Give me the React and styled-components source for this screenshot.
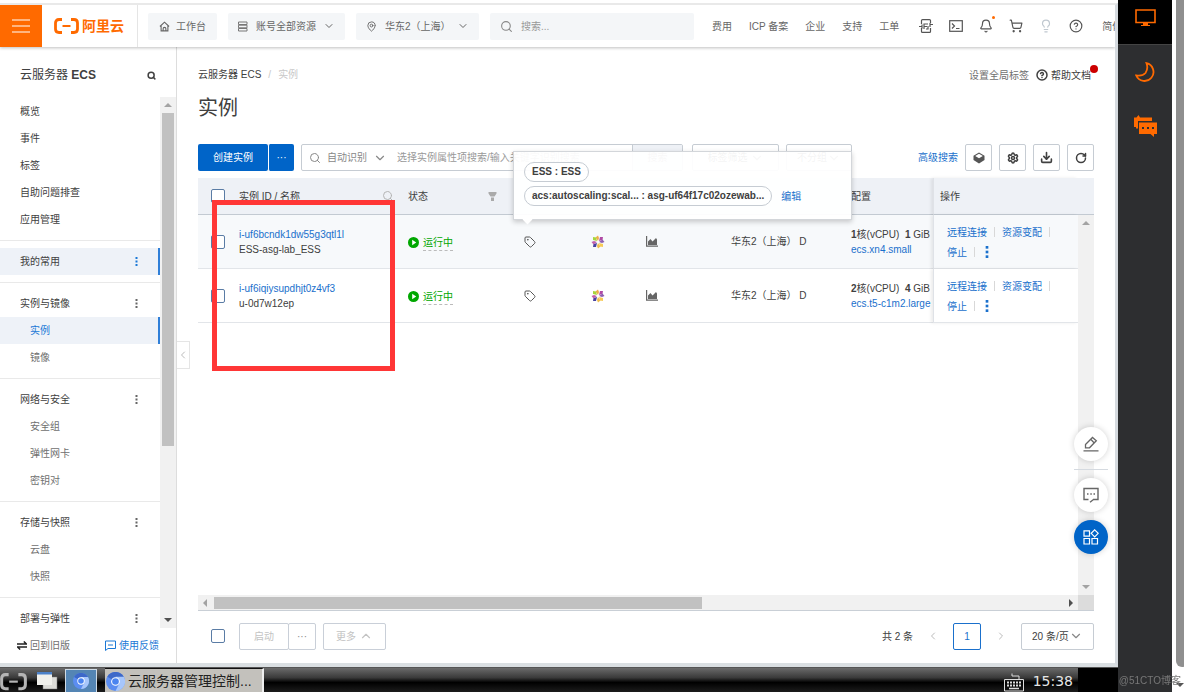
import React from "react"
import styled, { createGlobalStyle, css } from "styled-components"
import {
  Search,
  ChevronDown,
  ChevronUp,
  ChevronLeft,
  ChevronRight,
  MapPin,
  Bell,
  ShoppingCart,
  Lightbulb,
  CircleHelp,
  RotateCw,
  Settings,
  Tag,
  Download,
} from "lucide-react"

const GlobalStyle = createGlobalStyle`
  *, *::before, *::after {
    box-sizing: border-box;
  }
  body {
    margin: 0;
    font-family: "Liberation Sans", "Noto Sans CJK SC", sans-serif;
    font-size: 10px;
    line-height: 15px;
    color: #404040;
    background: #ffffff;
  }
  button, input, select {
    font: inherit;
    color: inherit;
    margin: 0;
  }
  button {
    padding: 0;
    border: none;
    background: none;
    cursor: pointer;
  }
  a {
    color: inherit;
    text-decoration: none;
  }
  h1, h2 {
    margin: 0;
    padding: 0;
  }
  svg {
    display: block;
    flex: none;
  }
`

const Screen = styled.div`
  display: flex;
  height: 100vh;
  min-height: 600px;
  overflow: hidden;
`

const Desktop = styled.div`
  flex: 1;
  min-width: 0;
  display: flex;
  flex-direction: column;
`

const Browser = styled.div`
  flex: 1;
  min-height: 0;
  display: flex;
  flex-direction: column;
  margin-top: 3px;
  border-top: 2px solid #e9e9e9;
  border-right: 3px solid #d5dadf;
  border-bottom: 4px solid #dadfe2;
  overflow: hidden;
`

/* ---------- top bar ---------- */

const TopBar = styled.header`
  flex: none;
  display: flex;
  align-items: center;
  height: 42px;
  background: #ffffff;
  box-shadow: 0 1px 3px rgba(0, 0, 0, 0.25);
  z-index: 2;
  overflow: clip;
  overflow-clip-margin: 4px;
  color: #666666;
`

const MenuButton = styled.button`
  flex: none;
  display: flex;
  align-items: center;
  justify-content: center;
  width: 42px;
  height: 42px;
  background: #ff6a00;
`

const Brand = styled.a`
  flex: none;
  display: flex;
  align-items: center;
  gap: 3px;
  width: 96px;
  height: 42px;
  padding-left: 12px;
  border-right: 1px solid #e5e5e5;
  color: #ff6a00;
  font-size: 14px;
  font-weight: 700;
`

const chip = css`
  display: flex;
  align-items: center;
  height: 27px;
  background: #f4f6f8;
  border-radius: 2px;
`

const ChipButton = styled.button`
  ${chip}
  flex: none;
  gap: 6px;
  margin-left: 10px;
  padding: 0 11px;
`

const ChipSelect = styled.label`
  ${chip}
  flex: none;
  gap: 8px;
  margin-left: 11px;
  padding: 0 10px;
`

const PlainSelect = styled.select`
  width: ${(p) => p.$width}px;
  appearance: none;
  padding: 0 16px 0 0;
  border: none;
  outline: none;
  background: none;
`

const SelectArrow = styled.span`
  margin-left: -20px;
  pointer-events: none;
`

const GlobalSearch = styled.label`
  ${chip}
  flex: 1;
  max-width: 204px;
  gap: 8px;
  margin-left: 11px;
  padding: 0 10px;
  color: #888888;
`

const BareInput = styled.input`
  flex: 1;
  min-width: 0;
  width: 100%;
  padding: 0;
  border: none;
  outline: none;
  background: none;
  &::placeholder {
    color: #999999;
    opacity: 1;
  }
`

const TopLinks = styled.nav`
  flex: none;
  display: flex;
  align-items: center;
  gap: 17px;
  width: 403px;
  margin-left: auto;
  white-space: nowrap;
`

const TopIcons = styled.div`
  display: flex;
  align-items: center;
  gap: 16px;
  margin: 0 2px 0 3px;
  color: #555555;
`

const BellButton = styled.button`
  position: relative;
  &::after {
    content: "";
    position: absolute;
    top: -3px;
    right: -2px;
    width: 3px;
    height: 3px;
    border-radius: 50%;
    background: #ff6a00;
  }
`

/* ---------- side navigation ---------- */

const Body = styled.div`
  flex: 1;
  min-height: 0;
  display: flex;
`

const Sidebar = styled.aside`
  flex: none;
  display: flex;
  flex-direction: column;
  width: 177px;
  border-right: 1px solid #dddddd;
`

const SideHeader = styled.div`
  flex: none;
  display: flex;
  align-items: center;
  justify-content: space-between;
  height: 50px;
  padding: 6px 20px 0;
`

const SideTitle = styled.h2`
  font-size: 12px;
  font-weight: 400;
`

const SideScroll = styled.div`
  flex: 1;
  min-height: 0;
  display: flex;
`

const SideList = styled.nav`
  flex: 1;
  overflow: hidden;
  padding-top: 1px;
`

const SideGroup = styled.div`
  padding-bottom: 7px;
  margin-bottom: 7px;
  border-bottom: 1px solid #e9e9e9;
`

const SideItem = styled.a`
  display: flex;
  align-items: center;
  justify-content: space-between;
  height: 27px;
  padding: 0 22px 0 ${(p) => (p.$nested ? 30 : 20)}px;
  color: ${(p) => (p.$nested ? "#707070" : "#404040")};
  ${(p) =>
    p.$active &&
    css`
      background: #eef2f8;
      border-right: 2px solid #2f7fd8;
      padding-right: 20px;
    `}
  ${(p) => p.$active && p.$nested && "color: #1a78d6;"}
`

const SideFooter = styled.div`
  flex: none;
  display: flex;
  align-items: center;
  justify-content: space-between;
  height: 35px;
  padding: 0 17px;
`

const FootLink = styled.a`
  display: flex;
  align-items: center;
  gap: 3px;
  color: ${(p) => (p.$primary ? "#1a78d6" : "#707070")};
`

/* ---------- scroll bars ---------- */

const ScrollTrack = styled.div`
  flex: none;
  display: flex;
  flex-direction: ${(p) => (p.$row ? "row" : "column")};
  align-items: center;
  background: #f1f1f1;
  ${(p) => (p.$row ? "height: 15px; padding: 0 4px;" : "width: 16px; padding: 5px 0;")}
`

const ScrollThumb = styled.div`
  background: #c1c1c1;
  ${(p) =>
    p.$row
      ? "width: 56%; height: 12px; margin-left: 6px;"
      : "width: 12px; height: 64%; margin-top: 5px;"}
`

const ArrowEnd = styled.span`
  display: flex;
  ${(p) => (p.$row ? "margin-left: auto;" : "margin-top: auto;")}
`

/* ---------- main column ---------- */

const Main = styled.main`
  position: relative;
  flex: 1;
  min-width: 0;
  display: flex;
  flex-direction: column;
  padding: 20px 21px 0;
`

const CollapseTab = styled.button`
  position: absolute;
  left: 0;
  top: 294px;
  display: flex;
  align-items: center;
  justify-content: center;
  width: 13px;
  height: 28px;
  border: 1px solid #e5e5e5;
  border-left: none;
  color: #bbbbbb;
`

const Crumbs = styled.div`
  flex: none;
  display: flex;
  justify-content: space-between;
  height: 16px;
`

const CrumbPath = styled.div`
  display: flex;
  gap: 7px;
  color: #c8c8c8;
`

const CrumbLink = styled.a`
  color: #404040;
`

const HelpLinks = styled.div`
  position: relative;
  display: flex;
  align-items: center;
  gap: 7px;
  padding-right: 3px;
  color: #707070;
`

const HelpLink = styled.a`
  display: flex;
  align-items: center;
  gap: 3px;
  color: #404040;
`

const RedDot = styled.span`
  position: absolute;
  top: -2px;
  right: -4px;
  width: 8px;
  height: 8px;
  border-radius: 50%;
  background: #cc0000;
`

const PageTitle = styled.h1`
  flex: none;
  margin: 10px 0 21px;
  font-size: 20px;
  line-height: 30px;
  font-weight: 400;
`

const Toolbar = styled.div`
  flex: none;
  display: flex;
  align-items: center;
  gap: 7px;
  height: 27px;
  margin-bottom: 7px;
`

const ButtonGroup = styled.div`
  display: flex;
`

const PrimaryButton = styled.button`
  width: ${(p) => p.$width}px;
  height: 27px;
  background: #0064c8;
  color: #ffffff;
  border-radius: 2px;
  & + & {
    border-left: 1px solid #ffffff;
  }
`

const FilterBox = styled.div`
  flex: 1;
  max-width: 382px;
  display: flex;
  align-items: center;
  gap: 6px;
  height: 27px;
  padding-left: 7px;
  border: 1px solid #c6ccd3;
  border-radius: 2px;
  color: #888888;
`

const FilterInput = styled(BareInput)`
  padding-left: 4px;
`

const FilterSubmit = styled.button`
  width: 50px;
  height: 25px;
  border-left: 1px solid #c6ccd3;
  background: #eef1f6;
  color: #888888;
`

const OutlineSelect = styled.label`
  display: flex;
  align-items: center;
  justify-content: center;
  width: ${(p) => p.$box}px;
  height: 27px;
  margin-left: ${(p) => (p.$gap ? 2 : 0)}px;
  border: 1px solid #c6ccd3;
  border-radius: 2px;
  svg {
    color: #888888;
  }
`

const ToolbarEnd = styled.div`
  display: flex;
  align-items: center;
  gap: 7px;
  margin-left: auto;
`

const Link = styled.a`
  color: #1a70cc;
`

const IconButton = styled.button`
  display: flex;
  align-items: center;
  justify-content: center;
  width: 27px;
  height: 27px;
  border: 1px solid #c6ccd3;
  border-radius: 2px;
`

/* ---------- instance table ---------- */

const TableArea = styled.section`
  position: relative;
  flex: 1;
  min-height: 0;
  display: flex;
`

const TableView = styled.div`
  flex: 1;
  min-width: 0;
`

const Table = styled.table`
  width: 100%;
  table-layout: fixed;
  border-collapse: separate;
  border-spacing: 0;
`

const Th = styled.th`
  height: 37px;
  padding: 0 10px;
  background: #eef1f6;
  border-bottom: 1px solid #c3cad2;
  font-weight: 400;
  text-align: left;
  white-space: nowrap;
`

const Td = styled.td`
  height: 54px;
  padding: 0 10px;
  border-bottom: 1px solid #e2e5e9;
  white-space: nowrap;
  overflow: hidden;
`

const Row = styled.tr`
  background: ${(p) => (p.$hover ? "#f7f9fb" : "#ffffff")};
`

const fixedEdge = css`
  border-left: 1px solid #dfe2e7;
  box-shadow: -2px 0 3px rgba(0, 0, 0, 0.08);
`

const OpsTh = styled(Th)`
  ${fixedEdge}
  padding: 0 6px;
`

const OpsTd = styled(Td)`
  ${fixedEdge}
  padding: 1px 0 0 13px;
`

const HeadInner = styled.div`
  display: flex;
  align-items: center;
  justify-content: space-between;
  padding-right: ${(p) => (p.$inset ? 7 : 0)}px;
  svg {
    color: #b4b4b4;
  }
  & > svg {
    margin-right: -6px;
  }
`

const Check = styled.input.attrs({ type: "checkbox" })`
  display: block;
  appearance: none;
  width: 14px;
  height: 14px;
  margin: 0 0 0 ${(p) => (p.$indent ? 13 : 3)}px;
  border: 1px solid #5a7ca5;
  border-radius: 2px;
  background: #ffffff;
`

const Status = styled.div`
  display: flex;
  align-items: center;
  gap: 4px;
  padding-top: 2px;
  color: #00a700;
`

const StatusText = styled.span`
  border-bottom: 1px dashed #bbbbbb;
`

const OpsLine = styled.div`
  display: flex;
  align-items: center;
  height: 20px;
  gap: 7px;
  color: #1a70cc;
`

const MoreButton = styled.button`
  padding-left: 3px;
`

const Bar = styled.span`
  width: 1px;
  height: 10px;
  background: #d8d8d8;
`

const ScrollColumn = styled.div`
  display: flex;
  flex-direction: column;
  &::before {
    content: "";
    height: 37px;
    background: #eef1f6;
    border-bottom: 1px solid #c3cad2;
  }
`

const GrowTrack = styled(ScrollTrack)`
  flex: 1;
`

const ScrollRow = styled.div`
  flex: none;
  display: flex;
  background: #dcdcdc;
  border-bottom: 1px solid #c9cfd6;
  padding-right: 16px;
  & > * {
    flex: 1;
  }
`

const Highlight = styled.div`
  position: absolute;
  left: 14px;
  top: 22px;
  width: 183px;
  height: 171px;
  border: 5px solid #ff3636;
  pointer-events: none;
`

const Balloon = styled.div`
  position: absolute;
  left: 315px;
  top: -27px;
  width: 339px;
  display: flex;
  flex-direction: column;
  align-items: flex-start;
  gap: 4px;
  padding: 10px 10px 13px;
  border: 1px solid #d3d6da;
  background: rgba(255, 255, 255, 0.94);
  box-shadow: 0 2px 5px rgba(0, 0, 0, 0.2);
  &::after {
    content: "";
    position: absolute;
    left: 10px;
    bottom: -4px;
    width: 7px;
    height: 7px;
    background: #ffffff;
    transform: rotate(45deg);
  }
`

const BalloonLine = styled.div`
  display: flex;
  align-items: center;
  gap: 9px;
`

const Pill = styled.span`
  height: 20px;
  padding: 0 7px;
  border: 1px solid #c6ccd3;
  border-radius: 10px;
  line-height: 18px;
  font-weight: 700;
  white-space: nowrap;
`

/* ---------- table footer ---------- */

const Footer = styled.div`
  flex: none;
  display: flex;
  align-items: center;
  gap: 7px;
  height: 52px;
  padding-bottom: 2px;
`

const GhostButton = styled.button`
  display: flex;
  align-items: center;
  justify-content: center;
  gap: 3px;
  width: ${(p) => p.$width}px;
  height: 27px;
  border: 1px solid #c9cfd8;
  border-radius: 2px;
  color: ${(p) => (p.$dark ? "#888888" : "#c3c3c3")};
  & + & {
    margin-left: -1px;
  }
`

const FooterGroup = styled(ButtonGroup)`
  margin-left: 7px;
`

const Pager = styled.div`
  display: flex;
  align-items: center;
  gap: 14px;
  margin-left: auto;
  & > button:not([aria-current]) {
    color: #bbbbbb;
  }
`

const PageNumber = styled.button`
  width: 28px;
  height: 27px;
  border: 1px solid #1a70cc;
  border-radius: 2px;
  color: #1a70cc;
`

const FloatBar = styled.div`
  position: absolute;
  right: 7px;
  bottom: 109px;
  display: flex;
  flex-direction: column;
  gap: 8px;
`

const RoundButton = styled.button`
  display: flex;
  align-items: center;
  justify-content: center;
  width: 34px;
  height: 34px;
  border-radius: 50%;
  background: ${(p) => (p.$primary ? "#0064c8" : "#ffffff")};
  color: ${(p) => (p.$primary ? "#ffffff" : "#666666")};
  box-shadow: 0 0 6px rgba(0, 0, 0, 0.18);
`

const FloatRule = styled.span`
  height: 1px;
  background: #d5dae0;
`

/* ---------- desktop task bar and remote rail ---------- */

const TaskBar = styled.footer`
  flex: none;
  display: flex;
  align-items: center;
  height: 25px;
  border-top: 1px solid #555555;
  background: linear-gradient(#6a6a6a 0, #3a3a3a 40%, #000000 60%, #1c1c1c 100%);
  color: #e5e5e5;
  overflow: hidden;
`

const Launcher = styled.button`
  margin-right: 10px;
  padding-top: 4px;
`

const Pinned = styled.button`
  display: flex;
  justify-content: center;
  width: 32px;
  height: 24px;
  margin: 2px 8px 0 7px;
  padding-top: 3px;
  background: #5485b4;
  border: 1px solid #cfdbe6;
  border-bottom: none;
`

const Task = styled.button`
  display: flex;
  align-items: center;
  gap: 3px;
  width: 159px;
  height: 24px;
  padding: 2px 2px 0 1px;
  background: #c3c1bc;
  border-top: 1px solid #111111;
  border-right: 2px solid #eeeeee;
  color: #222222;
  font-size: 14px;
  white-space: nowrap;
`

const Tray = styled.div`
  display: flex;
  align-items: center;
  align-self: stretch;
  gap: 9px;
  margin-left: auto;
  font-size: 14px;
  & > svg {
    align-self: flex-end;
  }
`

const Clock = styled.time`
  padding-top: 2px;
  font-family: "DejaVu Sans", sans-serif;
`

const TrayBlank = styled.span`
  align-self: stretch;
  width: 40px;
  margin-left: -4px;
  background: #000000;
`

const Rail = styled.aside`
  flex: none;
  display: flex;
  flex-direction: column;
  width: 54px;
  background: #2d2e30;
  color: #ff6a00;
`

const RailButton = styled.button`
  display: flex;
  align-items: center;
  justify-content: center;
  height: ${(p) => (p.$active ? 45 : 54)}px;
  padding-bottom: ${(p) => (p.$active ? 9 : 0)}px;
  background: ${(p) => (p.$active ? "#000000" : "none")};
  border-bottom: ${(p) => (p.$active ? "1px solid #444444" : "none")};
`

const OuterScroll = styled.div`
  flex: none;
  display: flex;
  flex-direction: column;
  width: 12px;
  padding-left: 4px;
  padding-bottom: 4px;
  gap: 15px;
  overflow: hidden;
`

const OuterThumb = styled.div`
  flex: 1;
  width: 12px;
  background: #8f8f8f;
  border-radius: 0 0 6px 6px;
`

const Watermark = styled.span`
  position: fixed;
  right: 3px;
  bottom: 4px;
  color: #777777;
`

/* ---------- drawings ---------- */

const Triangle = ({ dir, color = "#a3a3a3" }) => {
  const points = {
    up: "0,6 5,1 10,6",
    down: "0,1 5,6 10,1",
    left: "6,0 1,5 6,10",
    right: "1,0 6,5 1,10",
  }
  const row = dir === "left" || dir === "right"
  return (
    <svg width={row ? 6 : 8} height={row ? 8 : 6} viewBox={row ? "0 0 7 10" : "0 0 10 7"}>
      <polygon points={points[dir]} fill={color} />
    </svg>
  )
}

const BracketMark = ({ width = 25, color = "#ff6a00" }) => (
  <svg width={width} height={(width * 16) / 25} viewBox="0 0 25 16" fill="none" stroke={color}>
    <path d="M8 1.500H5Q1.500 1.500 1.500 5V11Q1.500 14.500 5 14.500H8" strokeWidth="2.800" />
    <path d="M17 1.500H20Q23.500 1.500 23.500 5V11Q23.500 14.500 20 14.500H17" strokeWidth="2.800" />
    <path d="M8.500 8H16.500" strokeWidth="2" />
  </svg>
)

const Dots = ({ color = "#555555", size = 9 }) => (
  <svg width={size / 3} height={size} viewBox="0 0 3 9" fill={color}>
    <rect x="0.500" width="2" height="2" />
    <rect x="0.500" y="3.500" width="2" height="2" />
    <rect x="0.500" y="7" width="2" height="2" />
  </svg>
)

const HomeIcon = () => (
  <svg width="11" height="11" viewBox="0 0 12 12" fill="none" stroke="#666" strokeWidth="1.200">
    <path d="M1 6 6 1.300 11 6M2.300 5V10.800H9.700V5M4.500 10.800V8.500Q4.500 7 6 7T7.500 8.500V10.800" />
  </svg>
)

const StackIcon = () => (
  <svg width="10" height="11" viewBox="0 0 10 11" fill="none" stroke="#777">
    <path d="M.5 1H9V3.500H.5ZM.5 4.200H9V6.800H.5ZM.5 7.500H9V10H.5Z" />
  </svg>
)

const ApiIcon = () => (
  <svg width="14" height="14" viewBox="0 0 14 14" fill="none" stroke="currentColor" strokeWidth="1.200">
    <path d="M2.500 5V1.500Q2.500.6 3.500.6H10.500Q11.500.6 11.500 1.500V4M2.500 9V12.500Q2.500 13.400 3.500 13.400H10.500Q11.500 13.400 11.500 12.500V9" />
    <path d="M0 7.500H3M11 5.500H14M5 10V5H9M5 7.500H8M9 7V10H7M3 9.500V5.500M11 4V8" />
  </svg>
)

const ShellIcon = () => (
  <svg width="14" height="12" viewBox="0 0 14 12" fill="none" stroke="currentColor" strokeWidth="1.200">
    <rect x=".7" y=".7" width="12.600" height="10.600" />
    <path d="M3 3.500 5.500 6 3 8.500M7 8.500H10.500" />
  </svg>
)

const FilterIcon = () => (
  <svg width="9" height="9" viewBox="0 0 8 9" fill="#aaaaaa">
    <path d="M0 0H8V1.500L6 4.500H2L0 1.500ZM2.500 5.500H5.500V9H2.500Z" />
  </svg>
)

const PlayIcon = () => (
  <svg width="11" height="11" viewBox="0 0 10 10">
    <circle cx="5" cy="5" r="5" fill="#00a700" />
    <path d="M3.800 2.500 7.500 5 3.800 7.500Z" fill="#fff" />
  </svg>
)

const PinwheelIcon = () => (
  <svg width="14" height="14" viewBox="-7 -7 14 14">
    <path d="M0-1-2.500-4.500 0-6.500 1-4Z" fill="#efae4a" />
    <path d="M1-1 2-5 5-5 4.500-2Z" fill="#b04aa5" />
    <path d="M1 0 4.500-2.500 6.500 0 4 1Z" fill="#8d5fb0" />
    <path d="M1 1 5 2 5 5 2 4.500Z" fill="#f7cb55" />
    <path d="M0 1 2.500 4.500 0 6.500-1 4Z" fill="#efbd4a" />
    <path d="M-1 1-2 5-5 5-4.500 2Z" fill="#4742a0" />
    <path d="M-1 0-4.500 2.500-6.500 0-4-1Z" fill="#c25fab" />
    <path d="M-1-1-5-2-5-5-2-4.500Z" fill="#a6d63b" />
  </svg>
)

const ChartIcon = () => (
  <svg width="12" height="11" viewBox="0 0 12 11" fill="#666666">
    <path d="M0 0H1.200V9.500H12V10.700H0Z" />
    <path d="M2 9V5.500L4.500 3 6.500 5.500 10 2 11 3.500V9Z" />
  </svg>
)

const CubeIcon = () => (
  <svg width="12" height="12" viewBox="0 0 12 12">
    <path d="M6 .5 11.500 3.800V8L6 11.500.5 8V3.800Z" fill="#555" />
    <path d="M6 1.800 9.800 4 6 6.300 2.200 4Z" fill="#fff" />
  </svg>
)

const SwapIcon = () => (
  <svg width="10" height="9" viewBox="0 0 10 9" fill="none" stroke="#222" strokeWidth="1.500">
    <path d="M0 3H9.500L6.800.5M10 6H.5L3.200 8.500" />
  </svg>
)

const CommentIcon = () => (
  <svg width="16" height="16" viewBox="0 0 16 16" fill="none" stroke="currentColor" strokeWidth="1.400">
    <path d="M10 12.500H15V1.500H1V12.500H5.500M10.500 12.500 7 15.200" />
    <path d="M4 7H5.500M7.300 7H8.800M10.500 7H12" />
  </svg>
)

const FeedbackIcon = () => (
  <svg width="11" height="11" viewBox="0 0 11 11" fill="none" stroke="currentColor">
    <path d="M.5 10.500V1H10.500V8.500H3L.5 10.500M3 5H8" />
  </svg>
)

const PencilIcon = () => (
  <svg width="16" height="16" viewBox="0 0 16 16" fill="none" stroke="currentColor" strokeWidth="1.300">
    <path d="M.5 14.800H15.500M2.500 8.500 9.500 1.500 13.300 4.700 6.500 11.800H2.500ZM8 3.500 11 6.700" />
  </svg>
)

const AppsIcon = () => (
  <svg width="16" height="16" viewBox="0 0 16 16" fill="none" stroke="currentColor" strokeWidth="1.200">
    <path d="M1 1.800H6.500V7.200H1ZM1 9.500H6.500V15H1ZM9 9.500H14.500V15H9ZM11.700.8 15.200 4.300 11.700 7.800 8.200 4.300Z" />
  </svg>
)

const WindowsIcon = () => (
  <svg width="21" height="20" viewBox="0 0 21 20">
    <rect x="6" y="7" width="14" height="12" fill="#dcdcd8" stroke="#777" strokeWidth=".5" />
    <rect y="2" width="15" height="13" fill="#f0f0ec" />
    <rect y="2" width="15" height="2.500" fill="#4a80c8" />
  </svg>
)

const ChromiumIcon = ({ size }) => (
  <svg width={size} height={size} viewBox="0 0 20 20">
    <circle cx="10" cy="10" r="10" fill="#5b8df0" />
    <path d="M10 10 1.300 5A10 10 0 0 1 18.700 5Z" fill="#3d68c9" />
    <path d="M10 5H18.700A10 10 0 0 1 10 20L14 12Z" fill="#a7c6fb" />
    <circle cx="10" cy="10" r="4.600" fill="#fff" />
    <circle cx="10" cy="10" r="3.500" fill="#4a84f0" />
  </svg>
)

const KeyboardIcon = () => (
  <svg width="20" height="20" viewBox="0 0 20 20" fill="none" stroke="#dddddd">
    <path d="M.5 7.500H19.500V19H.5ZM15 7.500V4H8V1.500" />
    <path d="M3 10.500H17M3 13.500H17" strokeWidth="2" strokeDasharray="2 1" />
    <path d="M5 16.500H15" strokeWidth="1.500" />
  </svg>
)

const MonitorIcon = () => (
  <svg width="21" height="18" viewBox="0 0 21 18" fill="none" stroke="currentColor" strokeWidth="1.600">
    <path d="M1 1H20V13.500H1Z" />
    <path d="M8 14H13V16H15V17H6V16H8Z" fill="currentColor" stroke="none" />
  </svg>
)

const MoonIcon = () => (
  <svg width="20" height="20" viewBox="0 0 20 20" fill="none" stroke="currentColor" strokeWidth="1.800">
    <path d="M11.500 1.200A9 9 0 1 1 1.200 13.500Q7.500 14.500 10.500 11Q13.500 6.500 11.500 1.200Z" />
  </svg>
)

const ChatIcon = () => (
  <svg width="23" height="22" viewBox="0 0 23 22" fill="currentColor">
    <path d="M0 2.500H2.500L4.500 0 6 2.500H18V6H4V13.500H2V12H0Z" />
    <path d="M5 7.500H23V19H20V22L16.500 19H5Z" />
    <path d="M8 12H10V14H8ZM13 12H15V14H13ZM18 12H20V14H18Z" fill="#2d2e30" />
  </svg>
)

/* ---------- data ---------- */

const groups = [
  { items: ["概览", "事件", "标签", "自助问题排查", "应用管理"] },
  { title: "我的常用", active: true },
  { title: "实例与镜像", nested: ["实例", "镜像"] },
  { title: "网络与安全", nested: ["安全组", "弹性网卡", "密钥对"] },
  { title: "存储与快照", nested: ["云盘", "快照"] },
  { title: "部署与弹性" },
]

const instances = [
  {
    id: "i-uf6bcndk1dw55g3qtl1l",
    name: "ESS-asg-lab_ESS",
    cpu: 1,
    memory: 1,
    type: "ecs.xn4.small",
  },
  {
    id: "i-uf6iqiysupdhjt0z4vf3",
    name: "u-0d7w12ep",
    cpu: 2,
    memory: 4,
    type: "ecs.t5-c1m2.large",
  },
]

function Dropdown({ label, width, arrow = 14 }) {
  return (
    <>
      <PlainSelect $width={width} aria-label={label}>
        <option>{label}</option>
      </PlainSelect>
      <SelectArrow>
        <ChevronDown size={arrow} strokeWidth={2} />
      </SelectArrow>
    </>
  )
}

function Header() {
  return (
    <TopBar>
      <MenuButton aria-label="菜单">
        <svg width="18" height="14" viewBox="0 0 18 14" stroke="#ffffff" strokeWidth="1.200">
          <path d="M0 1H18M0 7H18M0 13H18" />
        </svg>
      </MenuButton>
      <Brand href="#">
        <BracketMark />
        阿里云
      </Brand>
      <ChipButton>
        <HomeIcon />
        工作台
      </ChipButton>
      <ChipSelect>
        <StackIcon />
        <Dropdown label="账号全部资源" width={79} arrow={12} />
      </ChipSelect>
      <ChipSelect>
        <MapPin size={11} />
        <Dropdown label="华东2（上海）" width={84} arrow={12} />
      </ChipSelect>
      <GlobalSearch>
        <Search size={13} />
        <BareInput placeholder="搜索..." aria-label="搜索" />
      </GlobalSearch>
      <TopLinks>
        <a href="#">费用</a>
        <a href="#">ICP 备案</a>
        <a href="#">企业</a>
        <a href="#">支持</a>
        <a href="#">工单</a>
        <TopIcons>
          <button aria-label="API">
            <ApiIcon />
          </button>
          <button aria-label="Cloud Shell">
            <ShellIcon />
          </button>
          <BellButton aria-label="消息">
            <Bell size={14} />
          </BellButton>
          <button aria-label="购物车">
            <ShoppingCart size={14} />
          </button>
          <button aria-label="提示">
            <Lightbulb size={14} color="#c0c8d0" />
          </button>
          <button aria-label="帮助">
            <CircleHelp size={14} />
          </button>
        </TopIcons>
        <a href="#">简体</a>
      </TopLinks>
    </TopBar>
  )
}

function SideNav() {
  return (
    <Sidebar>
      <SideHeader>
        <SideTitle>
          云服务器 <b>ECS</b>
        </SideTitle>
        <button aria-label="查找">
          <Search size={9} strokeWidth={4} />
        </button>
      </SideHeader>
      <SideScroll>
        <SideList>
          {groups.map((group, i) => (
            <SideGroup key={i}>
              {group.items?.map((item) => (
                <SideItem href="#" key={item}>
                  {item}
                </SideItem>
              ))}
              {group.title && (
                <SideItem href="#" $active={group.active}>
                  {group.title}
                  <Dots color={group.active ? "#1a78d6" : "#666666"} />
                </SideItem>
              )}
              {group.nested?.map((item) => (
                <SideItem href="#" key={item} $nested $active={item === "实例"}>
                  {item}
                </SideItem>
              ))}
            </SideGroup>
          ))}
        </SideList>
        <ScrollTrack>
          <Triangle dir="up" />
          <ScrollThumb />
          <ArrowEnd>
            <Triangle dir="down" color="#505050" />
          </ArrowEnd>
        </ScrollTrack>
      </SideScroll>
      <SideFooter>
        <FootLink href="#">
          <SwapIcon />
          回到旧版
        </FootLink>
        <FootLink href="#" $primary>
          <FeedbackIcon />
          使用反馈
        </FootLink>
      </SideFooter>
    </Sidebar>
  )
}

function InstanceRow({ instance, hover }) {
  return (
    <Row $hover={hover}>
      <Td>
        <Check aria-label={instance.id} />
      </Td>
      <Td>
        <Link href="#">{instance.id}</Link>
        <br />
        {instance.name}
      </Td>
      <Td>
        <Status>
          <PlayIcon />
          <StatusText>运行中</StatusText>
        </Status>
      </Td>
      <Td>
        <Tag size={12} color="#555555" />
      </Td>
      <Td>
        <PinwheelIcon />
      </Td>
      <Td>
        <ChartIcon />
      </Td>
      <Td>华东2（上海） D</Td>
      <Td>
        <b>{instance.cpu}</b>核(vCPU) &nbsp;<b>{instance.memory}</b> GiB
        <br />
        <Link href="#">{instance.type}</Link>
      </Td>
      <OpsTd>
        <OpsLine>
          <a href="#">远程连接</a>
          <Bar />
          <a href="#">资源变配</a>
          <Bar />
        </OpsLine>
        <OpsLine>
          <a href="#">停止</a>
          <Bar />
          <MoreButton aria-label="更多操作">
            <Dots color="#1a70cc" size={12} />
          </MoreButton>
        </OpsLine>
      </OpsTd>
    </Row>
  )
}

function InstanceTable() {
  return (
    <TableArea>
      <TableView>
        <Table>
          <colgroup>
            <col width="31" />
            <col width="169" />
            <col width="116" />
            <col width="67" />
            <col width="55" />
            <col width="85" />
            <col width="120" />
            <col />
            <col width="145" />
          </colgroup>
          <thead>
            <tr>
              <Th>
                <Check aria-label="全选" />
              </Th>
              <Th>
                <HeadInner>
                  实例 ID / 名称
                  <Search size={12} />
                </HeadInner>
              </Th>
              <Th>
                <HeadInner $inset>
                  状态
                  <span>
                    <FilterIcon />
                  </span>
                </HeadInner>
              </Th>
              <Th />
              <Th />
              <Th />
              <Th />
              <Th>配置</Th>
              <OpsTh>操作</OpsTh>
            </tr>
          </thead>
          <tbody>
            {instances.map((instance, i) => (
              <InstanceRow key={instance.id} instance={instance} hover={i === 0} />
            ))}
          </tbody>
        </Table>
      </TableView>
      <ScrollColumn>
        <GrowTrack>
          <Triangle dir="up" />
          <ArrowEnd>
            <Triangle dir="down" />
          </ArrowEnd>
        </GrowTrack>
      </ScrollColumn>
      <Balloon role="tooltip">
        <BalloonLine>
          <Pill>ESS : ESS</Pill>
        </BalloonLine>
        <BalloonLine>
          <Pill>acs:autoscaling:scal... : asg-uf64f17c02ozewab...</Pill>
          <Link href="#">编辑</Link>
        </BalloonLine>
      </Balloon>
      <Highlight />
    </TableArea>
  )
}

export default function App() {
  return (
    <Screen>
      <GlobalStyle />
      <Desktop>
        <Browser>
          <Header />
          <Body>
            <SideNav />
            <Main>
              <CollapseTab aria-label="收起">
                <ChevronLeft size={12} />
              </CollapseTab>
              <Crumbs>
                <CrumbPath>
                  <CrumbLink href="#">云服务器 ECS</CrumbLink>
                  <span>/</span>
                  <span>实例</span>
                </CrumbPath>
                <HelpLinks>
                  <a href="#">设置全局标签</a>
                  <HelpLink href="#">
                    <CircleHelp size={12} strokeWidth={3} />
                    帮助文档
                  </HelpLink>
                  <RedDot />
                </HelpLinks>
              </Crumbs>
              <PageTitle>实例</PageTitle>
              <Toolbar>
                <ButtonGroup>
                  <PrimaryButton $width={70}>创建实例</PrimaryButton>
                  <PrimaryButton $width={26}>···</PrimaryButton>
                </ButtonGroup>
                <FilterBox>
                  <Search size={12} />
                  <Dropdown label="自动识别" width={60} />
                  <FilterInput
                    aria-label="筛选实例"
                    placeholder="选择实例属性项搜索/输入关键字识别搜索"
                  />
                  <FilterSubmit>搜索</FilterSubmit>
                </FilterBox>
                <OutlineSelect $box={87} $gap>
                  <Dropdown label="标签筛选" width={62} />
                </OutlineSelect>
                <OutlineSelect $box={66}>
                  <Dropdown label="不分组" width={50} />
                </OutlineSelect>
                <ToolbarEnd>
                  <Link href="#">高级搜索</Link>
                  <IconButton aria-label="资源组">
                    <CubeIcon />
                  </IconButton>
                  <IconButton aria-label="设置">
                    <Settings size={12} strokeWidth={3} />
                  </IconButton>
                  <IconButton aria-label="导出">
                    <Download size={13} strokeWidth={3} />
                  </IconButton>
                  <IconButton aria-label="刷新">
                    <RotateCw size={12} strokeWidth={3} />
                  </IconButton>
                </ToolbarEnd>
              </Toolbar>
              <InstanceTable />
              <ScrollRow>
                <ScrollTrack $row>
                  <Triangle dir="left" />
                  <ScrollThumb $row />
                  <ArrowEnd $row>
                    <Triangle dir="right" color="#505050" />
                  </ArrowEnd>
                </ScrollTrack>
              </ScrollRow>
              <Footer>
                <Check $indent aria-label="选择全部实例" />
                <FooterGroup>
                  <GhostButton $width={50}>启动</GhostButton>
                  <GhostButton $width={28} $dark>
                    ···
                  </GhostButton>
                </FooterGroup>
                <ButtonGroup>
                  <GhostButton $width={63}>
                    更多
                    <ChevronUp size={14} />
                  </GhostButton>
                </ButtonGroup>
                <Pager>
                  共 2 条
                  <button aria-label="上一页">
                    <ChevronLeft size={12} />
                  </button>
                  <PageNumber aria-current="page">1</PageNumber>
                  <button aria-label="下一页">
                    <ChevronRight size={12} />
                  </button>
                  <OutlineSelect $box={73}>
                    <Dropdown label="20 条/页" width={57} />
                  </OutlineSelect>
                </Pager>
              </Footer>
              <FloatBar>
                <RoundButton aria-label="编辑">
                  <PencilIcon />
                </RoundButton>
                <FloatRule />
                <RoundButton aria-label="咨询">
                  <CommentIcon />
                </RoundButton>
                <RoundButton $primary aria-label="应用">
                  <AppsIcon />
                </RoundButton>
              </FloatBar>
            </Main>
          </Body>
        </Browser>
        <TaskBar>
          <Launcher aria-label="开始">
            <BracketMark width={27} color="#b5b5b5" />
          </Launcher>
          <WindowsIcon />
          <Pinned aria-label="Chromium">
            <ChromiumIcon size={16} />
          </Pinned>
          <Task>
            <ChromiumIcon size={19} />
            云服务器管理控制...
          </Task>
          <Tray>
            <KeyboardIcon />
            <Clock>15:38</Clock>
            <TrayBlank />
          </Tray>
        </TaskBar>
      </Desktop>
      <Rail>
        <RailButton $active aria-label="显示">
          <MonitorIcon />
        </RailButton>
        <RailButton aria-label="夜间模式">
          <MoonIcon />
        </RailButton>
        <RailButton aria-label="消息">
          <ChatIcon />
        </RailButton>
      </Rail>
      <OuterScroll>
        <OuterThumb />
        <Triangle dir="down" color="#555555" />
      </OuterScroll>
      <Watermark>@51CTO博客</Watermark>
    </Screen>
  )
}
